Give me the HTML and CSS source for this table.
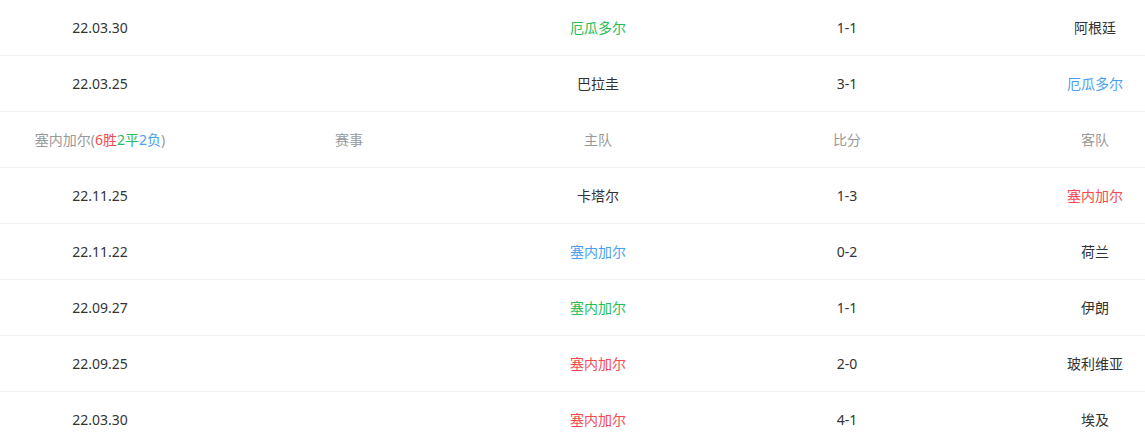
FILE: index.html
```html
<!DOCTYPE html>
<html lang="zh-CN">
<head>
<meta charset="utf-8">
<link rel="stylesheet" href="styles.css">
</head>
<body>
<div class="table">
  <div class="row"><div class="cell">22.03.30</div><div class="cell"></div><div class="cell green">厄瓜多尔</div><div class="cell">1-1</div><div class="cell">阿根廷</div></div>
  <div class="row"><div class="cell">22.03.25</div><div class="cell"></div><div class="cell">巴拉圭</div><div class="cell">3-1</div><div class="cell blue">厄瓜多尔</div></div>
  <div class="row head"><div class="cell">塞内加尔(<span class="red">6胜</span><span class="green">2平</span><span class="blue">2负</span>)</div><div class="cell">赛事</div><div class="cell">主队</div><div class="cell">比分</div><div class="cell">客队</div></div>
  <div class="row"><div class="cell">22.11.25</div><div class="cell"></div><div class="cell">卡塔尔</div><div class="cell">1-3</div><div class="cell red">塞内加尔</div></div>
  <div class="row"><div class="cell">22.11.22</div><div class="cell"></div><div class="cell blue">塞内加尔</div><div class="cell">0-2</div><div class="cell">荷兰</div></div>
  <div class="row"><div class="cell">22.09.27</div><div class="cell"></div><div class="cell green">塞内加尔</div><div class="cell">1-1</div><div class="cell">伊朗</div></div>
  <div class="row"><div class="cell">22.09.25</div><div class="cell"></div><div class="cell red">塞内加尔</div><div class="cell">2-0</div><div class="cell">玻利维亚</div></div>
  <div class="row"><div class="cell">22.03.30</div><div class="cell"></div><div class="cell red">塞内加尔</div><div class="cell">4-1</div><div class="cell">埃及</div></div>
</div>
</body>
</html>
```
FILE: styles.css
```css
html, body {
  margin: 0;
  padding: 0;
  background: #fff;
  overflow: hidden;
}
body {
  font-family: "Noto Sans", "Noto Sans CJK SC", sans-serif;
  font-size: 14px;
  color: #333;
}
.table {
  width: 100%;
}
.row {
  display: grid;
  grid-template-columns: 224.5px 249px 249px 249px 1fr;
  height: 55px;
  border-bottom: 1px solid #f0f0f0;
  align-items: center;
}
.cell {
  text-align: center;
  line-height: 20px;
  white-space: nowrap;
}
.cell:first-child {
  padding-right: 24.5px;
}
.cell:last-child {
  padding-left: 73.5px;
}
.head .cell {
  color: #999;
}
.head .cell .red, .red { color: #f54a4f; }
.head .cell .green, .green { color: #27bd57; }
.head .cell .blue, .blue { color: #4b9ff0; }
```
